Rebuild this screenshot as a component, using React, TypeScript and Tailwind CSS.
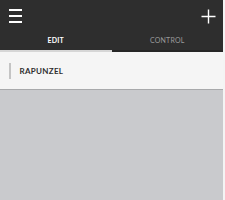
export default function App() {
  return (
    <div className="flex h-[200px] w-[225px] bg-[#f4f4f4] font-['Lato',sans-serif]">
      <div className="flex w-[223px] flex-col">
        <header className="flex h-[31px] items-center justify-between bg-[#2e2e2e] pl-[9px] pr-[7px] pt-[1px]">
          <div className="flex w-[13px] flex-col gap-[4.5px]">
            <span className="h-[1.5px] bg-white" />
            <span className="h-[1.5px] bg-white" />
            <span className="h-[1.5px] bg-white" />
          </div>
          <svg width="15" height="15" viewBox="0 0 15 15" className="text-white">
            <path d="M7.5 0.5V14.5M0.5 7.5H14.5" stroke="currentColor" strokeWidth="1.4" />
          </svg>
        </header>
        <nav className="flex h-[21px] bg-[#2e2e2e] text-[7px] tracking-[0.2px]">
          <div className="flex flex-1 flex-col">
            <div className="flex flex-1 items-center justify-center font-bold text-white">EDIT</div>
            <div className="h-[2px] bg-[#d6d6d6]" />
          </div>
          <div className="flex flex-1 flex-col">
            <div className="flex flex-1 items-center justify-center text-[#9a9a9a]">CONTROL</div>
            <div className="h-[2px] bg-[#262626]" />
          </div>
        </nav>
        <div className="flex h-[37px] items-center gap-[9px] bg-[#f5f5f5] pl-[9px]">
          <span className="h-[16px] w-[1.5px] bg-[#c4c4c4]" />
          <span className="text-[8px] font-bold tracking-[0.3px] text-[#2f2f2f]">RAPUNZEL</span>
        </div>
        <div className="h-[1px] bg-[#a8a9ab]" />
        <div className="flex-1 bg-[#c9cacd]" />
      </div>
      <div className="w-[2px] bg-[#f4f4f4]" />
    </div>
  );
}
